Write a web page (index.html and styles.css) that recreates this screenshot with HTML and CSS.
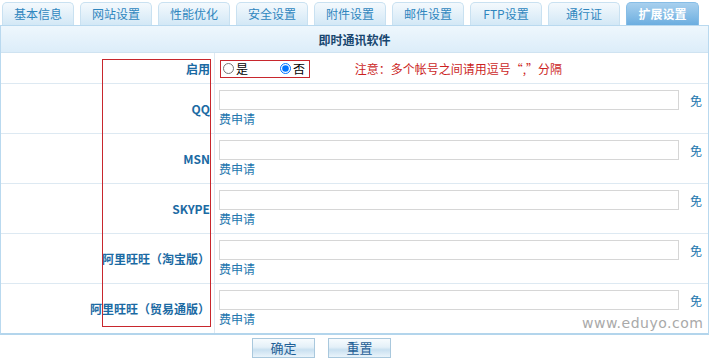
FILE: index.html
```html
<!DOCTYPE html>
<html lang="zh-CN">
<head>
    <meta charset="UTF-8">
    <title>扩展设置</title>
    <link rel="stylesheet" href="styles.css">
</head>
<body>
    <ul class="tabs">
        <li>基本信息</li>
        <li>网站设置</li>
        <li>性能优化</li>
        <li>安全设置</li>
        <li>附件设置</li>
        <li>邮件设置</li>
        <li>FTP设置</li>
        <li>通行证</li>
        <li class="active">扩展设置</li>
    </ul>

    <div class="panel">
        <table class="form">
            <tr>
                <th colspan="2" class="caption">即时通讯软件</th>
            </tr>
            <tr class="row-first">
                <td class="label">启用</td>
                <td class="value">
                    <span class="radios">
                        <label><input type="radio" name="im"> 是</label>
                        <label class="no"><input type="radio" name="im" checked> 否</label>
                    </span>
                    <span class="note">注意：多个帐号之间请用逗号“,”分隔</span>
                </td>
            </tr>
            <tr>
                <td class="label">QQ</td>
                <td class="value"><input type="text" class="txt">免费申请</td>
            </tr>
            <tr>
                <td class="label">MSN</td>
                <td class="value"><input type="text" class="txt">免费申请</td>
            </tr>
            <tr>
                <td class="label">SKYPE</td>
                <td class="value"><input type="text" class="txt">免费申请</td>
            </tr>
            <tr>
                <td class="label">阿里旺旺（淘宝版）</td>
                <td class="value"><input type="text" class="txt">免费申请</td>
            </tr>
            <tr>
                <td class="label">阿里旺旺（贸易通版）</td>
                <td class="value"><input type="text" class="txt">免费申请</td>
            </tr>
        </table>
        <div class="mark"></div>
        <div class="watermark">www.eduyo.com</div>
    </div>

    <div class="buttons">
        <button class="btn">确定</button>
        <button class="btn">重置</button>
    </div>
</body>
</html>
```

FILE: styles.css
```css
body {
    margin: 0;
    font-family: "Noto Sans CJK SC", "Liberation Sans", sans-serif;
    font-size: 12px;
    background: #fff;
    width: 711px;
    height: 358px;
    overflow: hidden;
}
.tabs {
    list-style: none;
    margin: 0;
    padding: 2px 0 0 2px;
    display: flex;
    gap: 6px;
    height: 23px;
}
.tabs li {
    width: 72px;
    height: 23px;
    line-height: 22px;
    text-align: center;
    color: #2f86be;
    font-size: 12px;
    border: 1px solid #c9e1f1;
    border-bottom: none;
    border-radius: 5px 5px 0 0;
    background: linear-gradient(#f4f9fd, #d3e8f6);
    box-sizing: border-box;
}
.tabs li.active {
    width: 73px;
    color: #fff;
    font-weight: bold;
    background: linear-gradient(#a8d0ee, #6caee0);
    border-color: #86bde6;
}
.panel {
    position: relative;
    width: 709px;
    border: 1px solid #b9d9ef;
    border-bottom: 2px solid #b3d5ec;
    box-sizing: border-box;
}
.form {
    width: 100%;
    border-collapse: collapse;
}
.caption {
    height: 26px;
    padding: 0;
    background: linear-gradient(#eef7fd, #dcedf9);
    color: #17466f;
    font-size: 12px;
    font-weight: bold;
    text-align: center;
    border-bottom: 1px solid #cfe3f1;
}
.form td {
    height: 49px;
    border-bottom: 1px solid #dde9f2;
    padding: 0;
}
.form tr:last-child td {
    border-bottom: none;
}
.form .row-first td {
    height: 30px;
}
.label {
    width: 209px;
    padding-right: 4px !important;
    text-align: right;
    color: #1b6aa3;
    font-weight: bold;
    border-right: 1px solid #dde9f2;
    white-space: nowrap;
}
.value {
    padding-left: 4px !important;
    color: #2276ae;
    line-height: 18px;
}
.radios {
    display: inline-flex;
    align-items: center;
    width: 88px;
    height: 16px;
    border: 1px solid #c8272d;
    color: #000;
    margin-left: 1px;
    vertical-align: middle;
}
.radios label {
    display: inline-flex;
    align-items: center;
    gap: 2px;
}
.radios label.no {
    margin-left: 30px;
}
.radios input {
    width: 11px;
    height: 11px;
    margin: 0 0 0 2px;
}
.note {
    color: #cc1f1f;
    margin-left: 42px;
    vertical-align: middle;
}
.txt {
    width: 460px;
    height: 20px;
    border: 1px solid #d6d6d6;
    box-sizing: border-box;
    margin: 0 11px 0 0;
    vertical-align: bottom;
    background: #fff;
}
.mark {
    position: absolute;
    left: 101px;
    top: 33px;
    width: 107px;
    height: 266px;
    border: 1px solid #c8272d;
    pointer-events: none;
}
.watermark {
    position: absolute;
    left: 581px;
    top: 289px;
    font-family: "DejaVu Sans", sans-serif;
    font-size: 14px;
    color: #a9a9a9;
    letter-spacing: 0.5px;
    text-shadow: 1px 0 #fff, -1px 0 #fff, 0 1px #fff, 0 -1px #fff;
}
.buttons {
    padding: 3px 0 0 252px;
    display: flex;
    gap: 13px;
}
.btn {
    width: 63px;
    height: 20px;
    border: 1px solid #a9c8dd;
    background: linear-gradient(#f7fbfe 0%, #e4f0f8 45%, #c9e0f0 60%, #eaf4fb 100%);
    color: #1f5f96;
    font-family: "Noto Sans CJK SC", sans-serif;
    font-size: 13px;
    line-height: 16px;
    padding: 0;
}
```
